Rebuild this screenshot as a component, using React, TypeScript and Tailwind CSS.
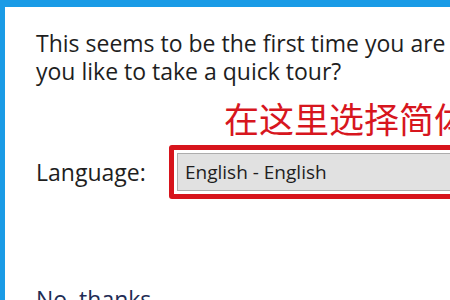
const App = () => {
  return (
    <div className="w-[450px] h-[300px] overflow-hidden bg-white border-t-[7px] border-l-[5px] border-[#1a9be6]">
      <div className="pl-[31px] pt-[22px] font-['Open_Sans',sans-serif] text-[#1e1e1e]">
        <p className="text-[23px] leading-[28px] whitespace-nowrap">
          This seems to be the first time you are
          <br />
          you like to take a quick tour?
        </p>
        <p className="mt-[15px] ml-[188px] text-[35px] leading-[35px] text-[#d7161e] whitespace-nowrap font-['Noto_Sans_CJK_SC',sans-serif]">
          在这里选择简体
        </p>
        <div className="mt-[10px] flex items-center">
          <span className="w-[133px] shrink-0 text-[23px] leading-[28px]">Language:</span>
          <div className="w-[300px] shrink-0 rounded-[3px] border-[5px] border-[#d7141c] p-[3px]">
            <div className="h-[38px] border border-[#adadad] bg-[#e1e1e1] pl-[7px] flex items-center text-[19px] text-[#1e1e1e] whitespace-nowrap">
              English - English
            </div>
          </div>
        </div>
        <p className="mt-[86px] text-[23px] leading-[28px] text-[#1f2d55] whitespace-nowrap">No, thanks</p>
      </div>
    </div>
  );
};

export default App;
